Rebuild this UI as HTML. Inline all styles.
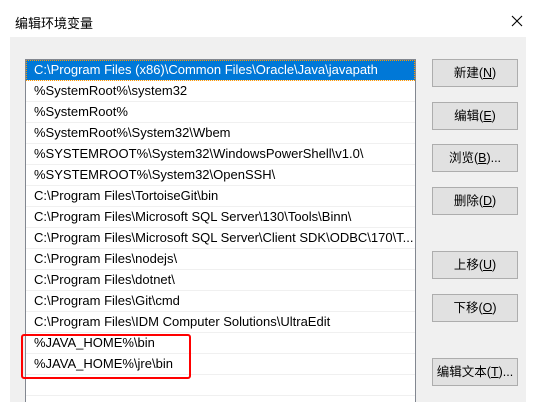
<!DOCTYPE html><html><head><style>
html,body{margin:0;width:539px;height:402px;overflow:hidden}
body{background:#fff;position:relative;font-family:"Liberation Sans","Noto Sans CJK SC",sans-serif;font-size:13px;color:#000}
.title{position:absolute;left:15px;top:13px;font-size:13px}
.x{position:absolute;left:511px;top:15px}
.panel{position:absolute;left:10px;top:37px;width:516px;height:365px;background:#f0f0f0}
.list{position:absolute;left:25px;top:59px;width:391px;height:343px;background:#fff;border:1px solid #828790;border-bottom:none;box-sizing:border-box;overflow:hidden}
.row{position:absolute;left:0;width:389px;height:21px;border-bottom:1px solid #f0f0f0;box-sizing:border-box;padding-left:8px;line-height:20px;white-space:nowrap;overflow:hidden}
.sel{background:#0078d7;color:#fff;outline:1px dotted #f90;outline-offset:-1px}
.btn{position:absolute;left:432px;width:86px;height:28px;background:#e1e1e1;border:1px solid #adadad;box-sizing:border-box;text-align:center;line-height:26px;font-size:12.5px}
.red{position:absolute;left:21px;top:334px;width:170px;height:45px;border:2px solid #f00;border-radius:3px;box-sizing:border-box}
</style></head><body>
<div class="title">编辑环境变量</div>
<svg class="x" width="12" height="12" viewBox="0 0 12 12"><path d="M1 1L11 11M11 1L1 11" stroke="#000" stroke-width="1.1"/></svg>
<div class="panel"></div>
<div class="list">
<div class="row sel" style="top:0">C:\Program Files (x86)\Common Files\Oracle\Java\javapath</div>
<div class="row" style="top:21px">%SystemRoot%\system32</div>
<div class="row" style="top:42px">%SystemRoot%</div>
<div class="row" style="top:63px">%SystemRoot%\System32\Wbem</div>
<div class="row" style="top:84px">%SYSTEMROOT%\System32\WindowsPowerShell\v1.0\</div>
<div class="row" style="top:105px">%SYSTEMROOT%\System32\OpenSSH\</div>
<div class="row" style="top:126px">C:\Program Files\TortoiseGit\bin</div>
<div class="row" style="top:147px">C:\Program Files\Microsoft SQL Server\130\Tools\Binn\</div>
<div class="row" style="top:168px">C:\Program Files\Microsoft SQL Server\Client SDK\ODBC\170\T...</div>
<div class="row" style="top:189px">C:\Program Files\nodejs\</div>
<div class="row" style="top:210px">C:\Program Files\dotnet\</div>
<div class="row" style="top:231px">C:\Program Files\Git\cmd</div>
<div class="row" style="top:252px">C:\Program Files\IDM Computer Solutions\UltraEdit</div>
<div class="row" style="top:273px">%JAVA_HOME%\bin</div>
<div class="row" style="top:294px">%JAVA_HOME%\jre\bin</div>
<div class="row" style="top:315px"></div>
</div>
<div class="red"></div>
<div class="btn" style="top:59px">新建(<u>N</u>)</div>
<div class="btn" style="top:102px">编辑(<u>E</u>)</div>
<div class="btn" style="top:144px">浏览(<u>B</u>)...</div>
<div class="btn" style="top:187px">删除(<u>D</u>)</div>
<div class="btn" style="top:251px">上移(<u>U</u>)</div>
<div class="btn" style="top:294px">下移(<u>O</u>)</div>
<div class="btn" style="top:358px">编辑文本(<u>T</u>)...</div>
</body></html>
